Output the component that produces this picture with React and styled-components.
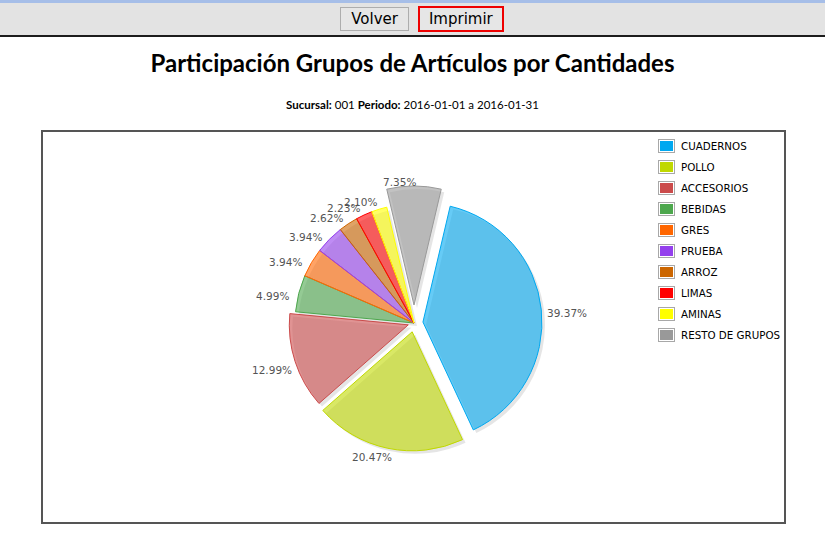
import styled, { createGlobalStyle } from 'styled-components';

const GlobalStyle = createGlobalStyle`
  body {
    margin: 0;
    background: #fff;
    font-family: 'DejaVu Sans', sans-serif;
  }
`;

const Toolbar = styled.div`
  height: 32px;
  border-top: 3px solid #a6bee8;
  border-bottom: 2px solid #1c1c1c;
  background: #e3e3e3;
  display: flex;
  align-items: center;
  justify-content: center;
  gap: 9px;
  padding-left: 19px;
`;

const Button = styled.button`
  height: ${({ $focused }) => ($focused ? '26px' : '24px')};
  padding: 0 ${({ $focused }) => ($focused ? '9px' : '10px')};
  border: ${({ $focused }) => ($focused ? '2px solid #ee0000' : '1px solid #adadad')};
  background: #e6e6e6;
  font-family: 'DejaVu Sans', sans-serif;
  font-size: 15px;
  color: #000;
  line-height: 1;
`;

const Title = styled.h1`
  margin: 12px 0 0;
  text-align: center;
  font-family: Lato, 'Open Sans', sans-serif;
  font-weight: 700;
  font-size: 24px;
  line-height: 28px;
  color: #000;
`;

const Filters = styled.p`
  margin: 21px 0 0;
  text-align: center;
  font-family: Lato, 'Open Sans', sans-serif;
  font-size: 11.5px;
  line-height: 14px;
  color: #000;

  b {
    font-weight: 700;
  }
`;

const ChartBox = styled.div`
  box-sizing: border-box;
  margin: 18px 0 0 41px;
  width: 745px;
  height: 394px;
  border: 2px solid #555;
  display: flex;
`;

const Plot = styled.svg`
  flex: none;
  display: block;
`;

const Legend = styled.ul`
  list-style: none;
  margin: 0;
  padding: 3px 0 0;
`;

const LegendRow = styled.li`
  height: 21px;
  display: flex;
  align-items: center;
  gap: 6px;
  font-family: 'DejaVu Sans', sans-serif;
  font-size: 10.3px;
  color: #000;
`;

const Swatch = styled.span`
  box-sizing: border-box;
  width: 17px;
  height: 14px;
  border: 1px solid #a8a8a8;
  padding: 1px;
  background: #fff;

  &::after {
    content: '';
    display: block;
    width: 100%;
    height: 100%;
    background: ${({ color }) => color};
  }
`;

const groups = [
  { name: 'CUADERNOS', value: 39.37, color: '#00a8f0', explode: 9, label: [504, 182] },
  { name: 'POLLO', value: 20.47, color: '#c0d800', explode: 9, label: [309, 326] },
  { name: 'ACCESORIOS', value: 12.99, color: '#cb4b4b', explode: 6, label: [209, 239] },
  { name: 'BEBIDAS', value: 4.99, color: '#4da74d', explode: 0, label: [213, 165] },
  { name: 'GRES', value: 3.94, color: '#ff6600', explode: 0, label: [226, 131] },
  { name: 'PRUEBA', value: 3.94, color: '#9440ed', explode: 0, label: [246, 106] },
  { name: 'ARROZ', value: 2.62, color: '#cc6600', explode: 0, label: [267, 87] },
  { name: 'LIMAS', value: 2.23, color: '#ff0000', explode: 0, label: [284, 77] },
  { name: 'AMINAS', value: 2.1, color: '#ffff00', explode: 0, label: [301, 71] },
  { name: 'RESTO DE GRUPOS', value: 7.35, color: '#999999', explode: 18, label: [340, 51] },
];

const CX = 371;
const CY = 191;
const R = 119;
const START = 13.23;

const rad = (deg) => (deg * Math.PI) / 180;

function slicePath(a0, a1, ox, oy) {
  const x0 = ox + R * Math.sin(rad(a0));
  const y0 = oy - R * Math.cos(rad(a0));
  const x1 = ox + R * Math.sin(rad(a1));
  const y1 = oy - R * Math.cos(rad(a1));
  const large = a1 - a0 > 180 ? 1 : 0;
  return `M${ox},${oy} L${x0},${y0} A${R},${R} 0 ${large} 1 ${x1},${y1} Z`;
}

function buildSlices() {
  let angle = START;
  return groups.map((g) => {
    const a0 = angle;
    const a1 = angle + (g.value / 100) * 360;
    angle = a1;
    const mid = rad((a0 + a1) / 2);
    const ox = CX + g.explode * Math.sin(mid);
    const oy = CY - g.explode * Math.cos(mid);
    return { ...g, d: slicePath(a0, a1, ox, oy) };
  });
}

const PieChart = () => {
  const slices = buildSlices();
  return (
    <Plot width="615" height="390" viewBox="0 0 615 390">
      <g transform="translate(3,3)">
        {slices.map((s) => (
          <path key={s.name} d={s.d} fill="rgba(0,0,0,0.1)" />
        ))}
      </g>
      {slices.map((s) => (
        <path
          key={s.name}
          d={s.d}
          fill={s.color}
          fillOpacity="0.6"
          stroke={s.color}
          strokeWidth="1"
          strokeLinejoin="round"
        />
      ))}
      {slices.map((s) => (
        <text
          key={s.name}
          x={s.label[0]}
          y={s.label[1]}
          dominantBaseline="middle"
          fontFamily="'DejaVu Sans', sans-serif"
          fontSize="10.5"
          fill="#545454"
        >
          {s.value.toFixed(2)}%
        </text>
      ))}
    </Plot>
  );
};

const App = () => {
  return (
    <>
      <GlobalStyle />
      <Toolbar>
        <Button>Volver</Button>
        <Button $focused>Imprimir</Button>
      </Toolbar>
      <Title>Participación Grupos de Artículos por Cantidades</Title>
      <Filters>
        <b>Sucursal:</b> 001 <b>Periodo:</b> 2016-01-01 a 2016-01-31
      </Filters>
      <ChartBox>
        <PieChart />
        <Legend>
          {groups.map((g) => (
            <LegendRow key={g.name}>
              <Swatch color={g.color} />
              {g.name}
            </LegendRow>
          ))}
        </Legend>
      </ChartBox>
    </>
  );
};

export default App;
